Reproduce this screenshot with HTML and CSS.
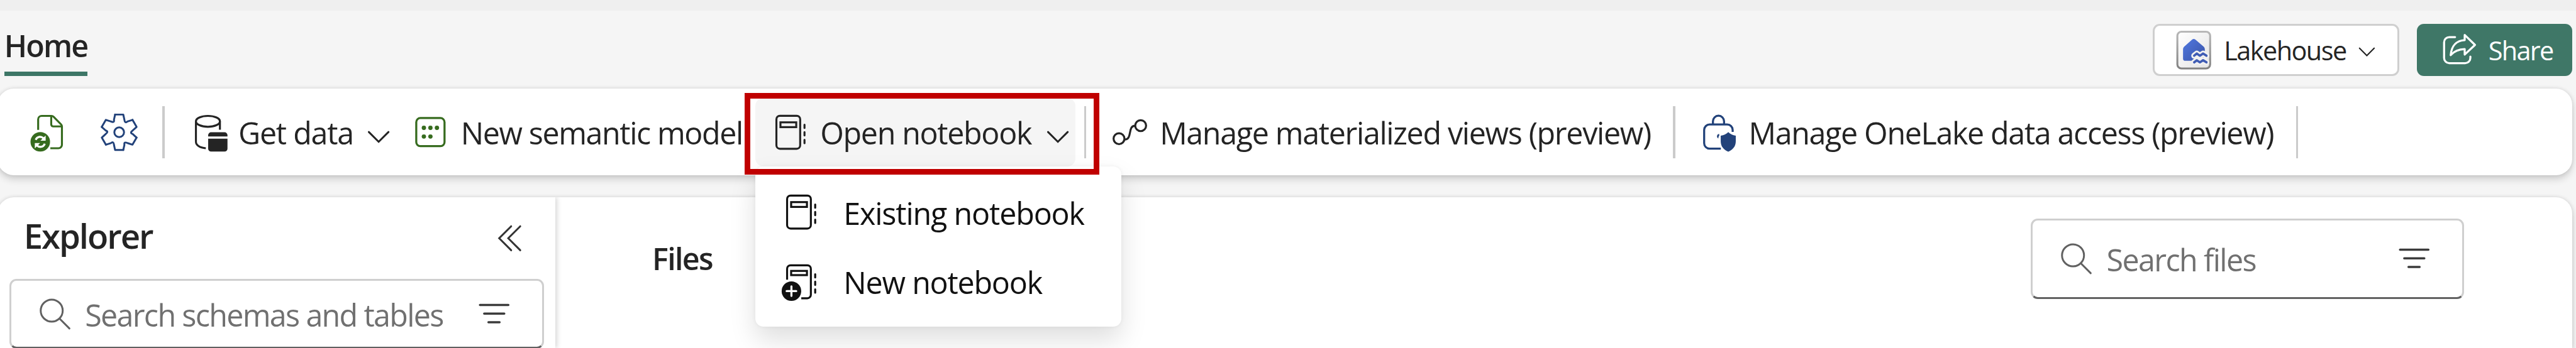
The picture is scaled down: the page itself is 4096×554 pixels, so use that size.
FILE: index.html
```html
<!DOCTYPE html>
<html lang="en">
<head>
<meta charset="utf-8">
<title>Lakehouse</title>
<link rel="stylesheet" href="styles.css">
</head>
<body>
<svg class="defs" width="0" height="0">
  <defs>
    <symbol id="chevron" viewBox="0 0 41 70"><path d="M3.7 34.5 20.5 51.3 37.3 34.5" fill="none" stroke="currentColor" stroke-width="3.2" stroke-linecap="round"/></symbol>
    <symbol id="search" viewBox="0 0 56 70"><g fill="none" stroke="#616161" stroke-width="3.2" stroke-linecap="round"><circle cx="22.8" cy="29.6" r="18.8"/><path d="M36.5 43.5 53 60"/></g></symbol>
    <symbol id="filter" viewBox="0 0 57 70"><path d="M4.5 19.8H53M11.7 34.6H46M19 49.4H38" fill="none" stroke="#3b3b3b" stroke-width="3.8" stroke-linecap="round"/></symbol>
    <symbol id="notebook" viewBox="0 0 57 70"><g fill="none" stroke="currentColor" stroke-width="3.4"><rect x="3.8" y="6.8" width="40.6" height="56.4" rx="6"/><rect x="10.7" y="18" width="27" height="8.2"/><path d="M51.8 22v5.6M51.8 34.8v5.6M51.8 48v5.6" stroke-linecap="round"/></g></symbol>
    <path id="tooth" d="M-7-30.3H7L8.9-21.5Q9.6-14.6 14.2-18.5L22.8-21.2"/>
    <linearGradient id="tileFill" x1="0" y1="0" x2="1" y2="1"><stop offset="0" stop-color="#fff"/><stop offset="1" stop-color="#e4e4e4"/></linearGradient>
    <linearGradient id="tileEdge" x1="0" y1="0" x2="0" y2="1"><stop offset="0" stop-color="#b8b8b8"/><stop offset="1" stop-color="#828282"/></linearGradient>
    <linearGradient id="house" x1="0" y1="0" x2="1" y2="1"><stop offset="0" stop-color="#5078e0"/><stop offset="1" stop-color="#3a54a8"/></linearGradient>
  </defs>
</svg>

<header class="header">
  <nav class="tab"><span class="tab-label">Home</span></nav>
  <div class="actions">
    <button class="mode">
      <svg class="tile" viewBox="0 0 60 68">
        <rect x="2.3" y="2.6" width="56" height="63" rx="7" fill="url(#tileFill)" stroke="url(#tileEdge)" stroke-width="3.3"/>
        <path d="M27.5 16.2q2.8-2.4 5.6 0L47.500 28.500q1.700 1.500 1.700 4V52.500H16q-4 0-4-4V32.500q0-2.500 1.700-4z" fill="url(#house)"/>
        <g fill="none" stroke-linejoin="round" stroke-linecap="round">
          <path d="M31 43.700 35.500 40 40.800 43.700 46.200 40 52 43.700M31 55 35.500 51.500 40.800 55 46.200 51.500 52 55" stroke="#f1f1f1" stroke-width="10"/>
          <path d="M31 43.700 35.500 40 40.800 43.700 46.200 40 52 43.700M31 55 35.500 51.500 40.800 55 46.200 51.500 52 55" stroke="#3f5cb4" stroke-width="4"/>
        </g>
      </svg>
      <span class="mode-label">Lakehouse</span>
      <svg class="mode-chevron" viewBox="0 0 31 24"><path d="M3 5 15.500 17.800 28 5" fill="none" stroke="currentColor" stroke-width="2.300" stroke-linecap="round"/></svg>
    </button>
    <button class="share">
      <svg class="share-icon" viewBox="0 0 60 60"><g fill="none" stroke="#fff" stroke-width="3.500" stroke-linecap="round" stroke-linejoin="round"><path d="M22.300 8.600H12.500a9 9 0 0 0-9 9V44.300a9 9 0 0 0 9 9H39.400a9 9 0 0 0 9-9V42"/><path d="M38.700 5 56.300 22 38.700 38.500V29.200C28 29.500 21 32.500 14.800 39.500 16 24 24.500 14.500 38.700 13.800z"/></g></svg>
      <span class="share-label">Share</span>
    </button>
  </div>
</header>

<section class="toolbar">
  <svg class="icon refresh" viewBox="0 0 60 70">
    <g fill="none" stroke="#366b1e" stroke-width="3.400" stroke-linejoin="round"><path d="M14.700 31V13a6 6 0 0 1 6-6H37.500q2 0 3.500 1.500L53.800 21.500q1.500 1.500 1.500 3.500V56.300a6 6 0 0 1-6 6H35.500"/><path d="M37 8V21.500a3.500 3.500 0 0 0 3.500 3.500H55"/></g>
    <circle cx="18.300" cy="51.300" r="16.700" fill="#366b1e"/>
    <g fill="none" stroke="#fff" stroke-width="3.500"><path d="M10.500 48C13 42 20 41 24.500 46M26 54.500C23.500 61 16.500 61.500 12 57"/></g>
    <path d="M27.500 40.500V49.500H18.500zM9 62.500V53.500H18z" fill="#fff"/>
  </svg>
  <svg class="icon gear" viewBox="0 0 64 70">
    <g transform="translate(31.700 35)" fill="none" stroke="#22427a" stroke-width="3.200" stroke-linejoin="round" stroke-linecap="round">
      <use href="#tooth"/><use href="#tooth" transform="rotate(60)"/><use href="#tooth" transform="rotate(120)"/><use href="#tooth" transform="rotate(180)"/><use href="#tooth" transform="rotate(240)"/><use href="#tooth" transform="rotate(300)"/>
      <circle r="8.300"/>
    </g>
  </svg>
  <i class="divider d1"></i>
  <svg class="icon database" viewBox="0 0 60 70">
    <g fill="none" stroke="#242424" stroke-width="3.400"><ellipse cx="24.300" cy="16.300" rx="20.500" ry="9.300"/><path d="M3.800 16.300V51C3.800 57 10 61.500 20.700 62.300M44.800 16.300V30.700"/></g>
    <path d="M24.700 42.300V40a5 5 0 0 1 5-5h23a5 5 0 0 1 5 5v2.300zM24.700 46h33V63a5 5 0 0 1-5 5h-23a5 5 0 0 1-5-5z" fill="#242424"/>
  </svg>
  <span class="label get-data">Get data</span>
  <svg class="icon chev chev-data"><use href="#chevron"/></svg>
  <svg class="icon model" viewBox="0 0 55 70">
    <rect x="3.100" y="10.700" width="48.300" height="48.100" rx="7" fill="none" stroke="#366b1e" stroke-width="3.500"/>
    <g fill="#366b1e"><circle cx="16.100" cy="27.400" r="3.700"/><circle cx="27.300" cy="27.400" r="3.700"/><circle cx="38.400" cy="27.400" r="3.700"/><circle cx="16.100" cy="42.300" r="3.700"/><circle cx="27.300" cy="42.300" r="3.700"/></g>
  </svg>
  <span class="label new-model">New semantic model</span>
  <div class="open">
    <svg class="icon book"><use href="#notebook"/></svg>
    <span class="label open-label">Open notebook</span>
    <svg class="icon chev chev-open"><use href="#chevron"/></svg>
    <div class="menu">
      <div class="menu-item"><svg class="icon book"><use href="#notebook"/></svg><span class="existing">Existing notebook</span></div>
      <div class="menu-item">
        <svg class="icon book" viewBox="0 0 57 70">
          <g fill="none" stroke="currentColor" stroke-width="3.400"><path d="M3.800 31.500V12.800a6 6 0 0 1 6-6H38.400a6 6 0 0 1 6 6V57.200a6 6 0 0 1-6 6H28"/><rect x="10.700" y="16.400" width="27" height="7.200"/><path d="M51.800 22v5.600M51.800 34.800v5.600M51.800 48v5.600" stroke-linecap="round"/></g>
          <circle cx="11.200" cy="51" r="16.700" fill="currentColor"/>
          <path d="M11.200 42.800v16.400M3 51h16.400" stroke="#fff" stroke-width="3.500" stroke-linecap="round"/>
        </svg>
        <span class="new-book">New notebook</span>
      </div>
    </div>
    <div class="highlight"></div>
  </div>
  <i class="divider d2"></i>
  <svg class="icon lineage" viewBox="0 0 64 70"><g fill="none" stroke="#242424" stroke-width="3.400"><circle cx="13.200" cy="46" r="9.300"/><circle cx="50.200" cy="23.700" r="9.300"/><path d="M22.500 47.500C37 47.500 27 23.700 41 23.700"/></g></svg>
  <span class="label views">Manage materialized views (preview)</span>
  <i class="divider d3"></i>
  <svg class="icon lock" viewBox="0 0 60 70">
    <g fill="none" stroke="#22427a" stroke-width="3.500"><path d="M19 21.500V16.200a9.500 9.500 0 0 1 19 0V21.500"/><path d="M52.700 34.500V31a9.300 9.300 0 0 0-9.300-9.300H13.300A9.300 9.300 0 0 0 4 31V53.700A9.300 9.300 0 0 0 13.300 63H32.500"/></g>
    <path d="M29.700 38a4 4 0 0 0-1.500 7.600q0-3.500 1.500-4.600z" fill="#22427a"/>
    <path d="M45.200 34.700Q50 40 58 40.700V50.500C58 59 53 65 45.200 68.300 37.300 65 32.300 59 32.300 50.500V40.700Q40.500 40 45.200 34.700z" fill="#22427a"/>
  </svg>
  <span class="label access">Manage OneLake data access (preview)</span>
  <i class="divider d4"></i>
</section>

<main class="content">
  <aside class="explorer">
    <div class="explorer-head">
      <h2 class="explorer-title">Explorer</h2>
      <svg class="collapse" viewBox="0 0 44 50"><path d="M24.500 4.500 4 25 24.500 45.500M40 4.500 19.500 25 40 45.500" fill="none" stroke="#333" stroke-width="3.200" stroke-linecap="round"/></svg>
    </div>
    <div class="field field-tables">
      <svg class="icon magnifier"><use href="#search"/></svg>
      <span class="hint hint-tables">Search schemas and tables</span>
      <svg class="icon filter"><use href="#filter"/></svg>
    </div>
  </aside>
  <section class="files">
    <h2 class="files-title">Files</h2>
    <div class="field field-files">
      <svg class="icon magnifier"><use href="#search"/></svg>
      <span class="hint hint-files">Search files</span>
      <svg class="icon filter"><use href="#filter"/></svg>
    </div>
  </section>
</main>
</body>
</html>
```
FILE: styles.css
```css
/* 1rem = 10 design pixels */
html { font-size: 9.30909px; overflow: hidden; }
* { box-sizing: border-box; }
body {
  margin: 0;
  height: 554px;
  overflow: hidden;
  background: #f5f5f5;
  color: #242424;
  font-family: "Open Sans", "Noto Sans", sans-serif;
  font-size: 5.2rem;
  line-height: 7.2rem;
  white-space: nowrap;
}
svg { display: block; flex: none; overflow: visible; }
h2 { margin: 0; font-weight: 600; }
button { margin: 0; font: inherit; white-space: nowrap; text-align: left; }
.defs { position: absolute; }

/* header */
.header {
  display: flex;
  justify-content: space-between;
  height: 15.2rem;
  padding: 4.1rem .6rem 0 .73rem;
  background: linear-gradient(#efefef 1.83rem, #f5f5f5 1.83rem);
}
.tab {
  width: 14.22rem;
  height: 8.9rem;
  border-bottom: .8rem solid #3d7666;
}
.tab-label { display: block; padding-top: .12rem; font-weight: 600; letter-spacing: -.038em; }
.actions { display: flex; gap: 2.95rem; }
.mode, .share {
  display: flex;
  align-items: center;
  height: 8.85rem;
  border-radius: 1.2rem;
  font-size: 4.45rem;
  line-height: 6rem;
}
.mode {
  width: 42.15rem;
  padding: 0 0 0 3.65rem;
  border: .33rem solid #cfcfcf;
  background: #fff;
  color: #242424;
}
.tile { width: 6rem; height: 6.8rem; }
.mode-label { width: 20.8rem; margin: .4rem 0 0 2.2rem; letter-spacing: -.0375em; }
.mode-chevron { width: 3.1rem; height: 2.4rem; margin: .8rem 0 0 2.1rem; }
.share {
  width: 26.6rem;
  padding: 0 0 0 4.3rem;
  border: 0;
  background: #3f7767;
  color: #fff;
}
.share-icon { width: 6rem; height: 6rem; }
.share-label { margin: .4rem 0 0 1.95rem; letter-spacing: -.042em; }

/* toolbar */
.toolbar {
  position: relative;
  z-index: 2;
  display: flex;
  align-items: center;
  width: 439.8rem;
  height: 14.8rem;
  margin-left: -.4rem;
  border-radius: 2.8rem;
  background: #fff;
  box-shadow: 0 0 .65rem rgba(0, 0, 0, .12), 0 .65rem 1.3rem rgba(0, 0, 0, .14);
}
.icon { height: 7rem; }
.chev { width: 4.1rem; }
.book { width: 5.7rem; }
.label { padding: .3rem 0 0 .12rem; }
.divider { flex: none; width: .35rem; height: 8.9rem; background: #cbcbcb; }
.refresh { width: 6rem; margin-left: 5.4rem; }
.gear { width: 6.4rem; margin-left: 6.2rem; }
.d1 { margin-left: 4.17rem; }
.database { width: 6rem; margin-left: 4.98rem; }
.get-data { width: 19.6rem; margin-left: 1.5rem; letter-spacing: -.0255em; }
.chev-data { margin-left: 2.4rem; }
.model { width: 5.5rem; margin-left: 4.1rem; }
.new-model { width: 48.2rem; margin-left: 2.3rem; letter-spacing: -.0289em; }
.open {
  position: relative;
  display: flex;
  align-items: center;
  width: 54.64rem;
  height: 11.7rem;
  margin-left: 2.26rem;
  padding-left: 3.14rem;
  border-radius: 1.4rem;
  background: #f5f5f5;
}
.open-label { width: 36.4rem; margin-left: 2.1rem; letter-spacing: -.0275em; }
.chev-open { margin-left: 2.3rem; }
.d2 { margin-left: 1.5rem; }
.lineage { width: 6.4rem; margin-left: 4.25rem; }
.views { width: 84.2rem; margin-left: 1.8rem; letter-spacing: -.0275em; }
.d3 { margin-left: 3.6rem; }
.lock { width: 6rem; margin-left: 4.55rem; }
.access { width: 90rem; margin-left: 1.9rem; letter-spacing: -.0279em; }
.d4 { margin-left: 3.65rem; }

/* open notebook menu and its callout frame */
.menu {
  position: absolute;
  top: 11.7rem;
  left: 0;
  width: 62.44rem;
  height: 27.4rem;
  padding-top: 1.85rem;
  border-radius: 1.4rem;
  background: #fff;
  color: #111;
  box-shadow: 0 0 .65rem rgba(0, 0, 0, .06), 0 2.2rem 4.4rem rgba(0, 0, 0, .13);
}
.menu-item { display: flex; align-items: center; gap: 4.35rem; height: 11.9rem; padding-left: 5rem; }
.existing { padding-top: .35rem; letter-spacing: -.0236em; }
.new-book { padding-top: .25rem; letter-spacing: -.0252em; }
.highlight {
  position: absolute;
  top: -.8rem;
  left: -1.86rem;
  width: 60.6rem;
  height: 13.9rem;
  border: 1rem solid #c00000;
}

/* panels */
.content {
  display: flex;
  width: 439.8rem;
  height: 25.8rem;
  margin: 3.7rem 0 0 -.4rem;
  overflow: hidden;
  border-radius: 2.8rem 2.8rem 0 0;
  background: #fff;
  box-shadow: 0 0 .65rem rgba(0, 0, 0, .12), 0 .65rem 1.3rem rgba(0, 0, 0, .14);
}
.explorer {
  width: 95.2rem;
  padding: 0 1.9rem 0 2rem;
  border-radius: 2.8rem 0 0 0;
  box-shadow: .3rem 0 .8rem rgba(0, 0, 0, .15);
}
.explorer-head {
  display: flex;
  justify-content: space-between;
  align-items: center;
  height: 14.05rem;
  padding: 0 3.6rem 0 2.45rem;
}
.explorer-title { font-size: 5.85rem; letter-spacing: -.0373em; padding-bottom: .8rem; }
.collapse { width: 4.4rem; height: 5rem; }
.field {
  display: flex;
  align-items: center;
  border: .33rem solid #cfcfcf;
  border-bottom-color: #616161;
  border-radius: 1.2rem;
  background: #fff;
  color: #707070;
}
.field-tables { height: 11.9rem; padding-left: 4.6rem; }
.magnifier { width: 5.6rem; }
.filter { width: 5.7rem; }
.hint { margin-left: 2.4rem; padding-top: .3rem; }
.hint-tables { width: 62rem; letter-spacing: -.0344em; }
.field-tables .filter { margin-left: 5rem; }
.files { display: flex; flex: 1; justify-content: space-between; padding: 3.7rem 18.5rem 0 16.6rem; }
.files-title { padding-top: 3.2rem; font-size: 5.2rem; letter-spacing: -.0344em; }
.field-files { width: 74rem; height: 13.7rem; padding-left: 4.6rem; }
.hint-files { width: 27rem; letter-spacing: -.0334em; }
.field-files .filter { margin-left: 22.7rem; }
```
